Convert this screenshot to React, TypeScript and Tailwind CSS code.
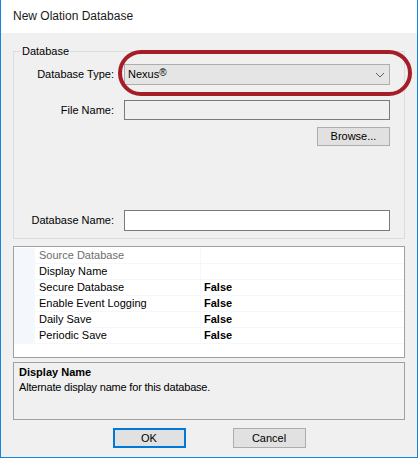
import React from 'react';

const rows = [
  { name: 'Source Database', value: '', dim: true },
  { name: 'Display Name', value: '' },
  { name: 'Secure Database', value: 'False' },
  { name: 'Enable Event Logging', value: 'False' },
  { name: 'Daily Save', value: 'False' },
  { name: 'Periodic Save', value: 'False' },
];

function WinButton({ label, primary, className = '' }: { label: string; primary?: boolean; className?: string }) {
  return (
    <button
      className={
        'w-[73px] bg-[#e1e1e1] flex items-center justify-center ' +
        (primary ? 'border-2 border-[#0078d7] ' : 'border border-[#adadad] ') +
        className
      }
    >
      {label}
    </button>
  );
}

export default function App() {
  return (
    <div className="relative w-[418px] h-[458px] flex flex-col bg-[#f0f0f0] border-x border-b border-[#1883d7] text-[11px] leading-[13px] text-black font-['Liberation_Sans',Arial,sans-serif]">
      {/* Title bar */}
      <div className="h-[33px] shrink-0 bg-white flex items-center pl-[12px] pb-[1px] text-[12px] font-['Liberation_Sans',Arial,sans-serif] text-[#1a1a1a]">
        New Olation Database
      </div>

      <div className="flex flex-col px-[12px] pt-[18px]">
        {/* Group box */}
        <div className="relative h-[188px] border border-[#dcdcdc] pt-[12px]">
          <span className="absolute -top-[8px] left-[7px] px-[1px] bg-[#f0f0f0] leading-[14px]">Database</span>

          <div className="flex items-center gap-[10px]">
            <span className="w-[100px] text-right">Database Type:</span>
            <div className="w-[266px] h-[21px] bg-[#e5e5e5] border border-[#adadad] flex items-center pl-[3px] pr-[4px]">
              <span className="flex-1">
                Nexus<span className="relative -top-[2px] text-[10px]">®</span>
              </span>
              <svg width="10" height="6" viewBox="0 0 10 6" className="mt-[1px]">
                <polyline points="1,1 5,5 9,1" fill="none" stroke="#606060" strokeWidth="1" />
              </svg>
            </div>
          </div>

          <div className="flex items-center gap-[10px] mt-[15px]">
            <span className="w-[100px] text-right">File Name:</span>
            <div className="w-[266px] h-[20px] bg-[#f0f0f0] border border-[#7a7a7a]" />
          </div>

          <div className="flex gap-[10px] mt-[7px]">
            <span className="w-[100px]" />
            <div className="w-[266px] flex justify-end">
              <WinButton label="Browse..." className="h-[19px]" />
            </div>
          </div>

          <div className="flex items-center gap-[10px] mt-[64px]">
            <span className="w-[100px] text-right">Database Name:</span>
            <div className="w-[266px] h-[21px] bg-white border border-[#7a7a7a]" />
          </div>
        </div>

        {/* Property grid */}
        <div className="mt-[7px] h-[112px] bg-white border border-[#a0a0a0] pt-[1px]">
          {rows.map((r) => (
            <div key={r.name} className="flex h-[16px] border-b border-[#f4f7fc] leading-[15px]">
              <div className="w-[21px] bg-[#f4f7fc]" />
              <div className={'w-[166px] pl-[4px] border-r border-[#f4f7fc] ' + (r.dim ? 'text-[#6d6d6d]' : '')}>
                {r.name}
              </div>
              <div className="pl-[3px] font-bold">{r.value}</div>
            </div>
          ))}
        </div>

        {/* Description */}
        <div className="mt-[4px] h-[58px] border border-[#a0a0a0] bg-[#f0f0f0] pl-[5px] pt-[2px]">
          <div className="font-bold leading-[14px]">Display Name</div>
          <div className="mt-[2px] tracking-[-0.2px]">Alternate display name for this database.</div>
        </div>

        {/* Buttons */}
        <div className="mt-[8px] flex justify-center gap-[47px]">
          <WinButton label="OK" primary className="h-[20px]" />
          <WinButton label="Cancel" className="h-[20px]" />
        </div>
      </div>

      {/* Highlight ring */}
      <div className="absolute left-[117px] top-[50px] w-[294px] h-[46px] rounded-full border-[4px] border-[#a51d26] pointer-events-none" />
    </div>
  );
}
